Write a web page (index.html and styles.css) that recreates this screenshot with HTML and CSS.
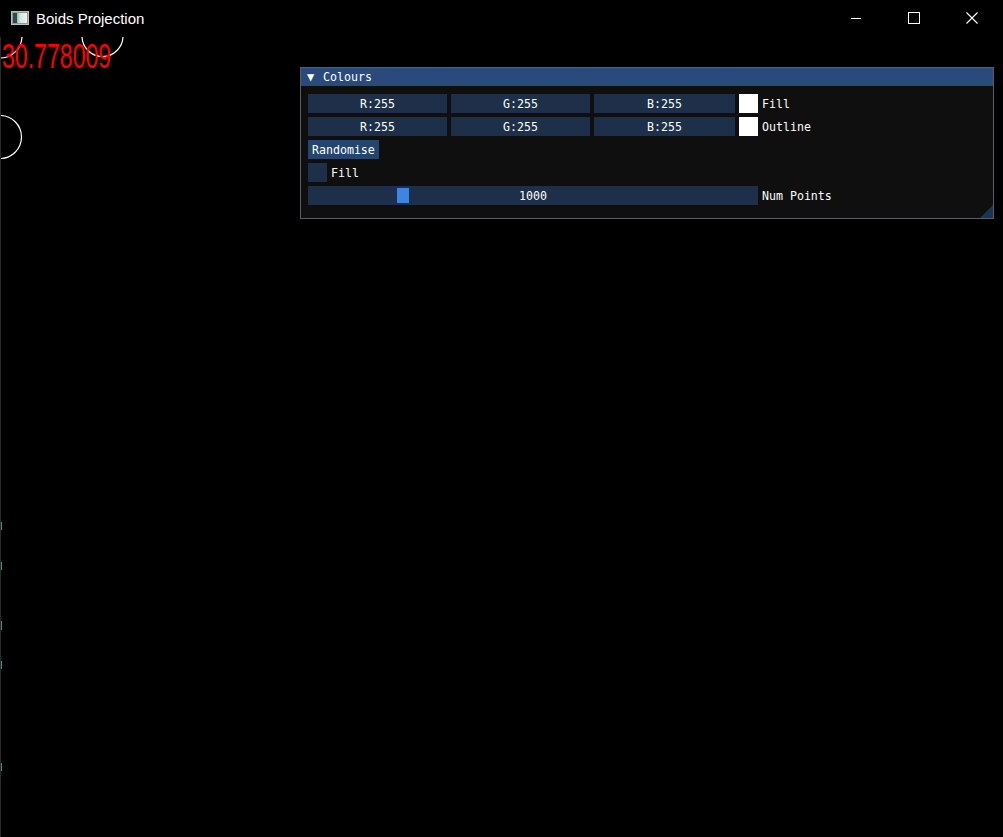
FILE: index.html
```html
<!DOCTYPE html>
<html>
<head>
<meta charset="utf-8">
<link rel="stylesheet" href="styles.css">
</head>
<body>
<div class="app">
  <header class="titlebar">
    <div class="app-title">
      <svg class="app-icon" width="18" height="14" viewBox="0 0 18 14">
        <defs>
          <linearGradient id="g" x1="0" x2="1" y1="0" y2="0">
            <stop offset="0" stop-color="#3d7f74"/>
            <stop offset="0.5" stop-color="#cfe6e0"/>
            <stop offset="1" stop-color="#eef4f3"/>
          </linearGradient>
        </defs>
        <rect x="0.5" y="0.5" width="17" height="13" fill="#8a9896" stroke="#b9c2c1"/>
        <rect x="2" y="2" width="14" height="10" fill="url(#g)"/>
        <rect x="2" y="2" width="4" height="10" fill="#2e4b49"/>
      </svg>
      <span class="app-name">Boids Projection</span>
    </div>
    <div class="win-controls">
      <div class="win-btn"><svg width="12" height="12" viewBox="0 0 12 12"><line x1="1" y1="6.5" x2="11" y2="6.5" stroke="#fff" stroke-width="1"/></svg></div>
      <div class="win-btn"><svg width="12" height="12" viewBox="0 0 12 12"><rect x="0.5" y="0.5" width="11" height="11" fill="none" stroke="#fff" stroke-width="1"/></svg></div>
      <div class="win-btn"><svg width="12" height="12" viewBox="0 0 12 12"><path d="M0.5 0.5 L11.5 11.5 M11.5 0.5 L0.5 11.5" stroke="#fff" stroke-width="1.1"/></svg></div>
    </div>
  </header>

  <main class="canvas">
    <svg class="scene" width="1003" height="800" viewBox="0 0 1003 800">
      <circle cx="0" cy="-1" r="22" fill="none" stroke="#fff" stroke-width="1.2"/>
      <circle cx="102.5" cy="-1" r="20.5" fill="none" stroke="#fff" stroke-width="1.2"/>
      <circle cx="0" cy="100" r="21.5" fill="none" stroke="#fff" stroke-width="1.2"/>
      <g stroke="#4f8a8a" stroke-width="2">
        <line x1="1" y1="485" x2="1" y2="493"/>
        <line x1="1" y1="525" x2="1" y2="533"/>
        <line x1="1" y1="584" x2="1" y2="593"/>
        <line x1="1" y1="624" x2="1" y2="632"/>
        <line x1="1" y1="726" x2="1" y2="734"/>
      </g>
    </svg>

    <div class="fps">30.778009</div>

    <section class="panel">
      <div class="panel-title"><span class="tri">▼</span><span>Colours</span></div>
      <div class="panel-body">
        <div class="row">
          <div class="frame w139">R:255</div>
          <div class="frame w139">G:255</div>
          <div class="frame w141">B:255</div>
          <div class="swatch"></div>
          <span class="label">Fill</span>
        </div>
        <div class="row">
          <div class="frame w139">R:255</div>
          <div class="frame w139">G:255</div>
          <div class="frame w141">B:255</div>
          <div class="swatch"></div>
          <span class="label">Outline</span>
        </div>
        <div class="row">
          <div class="button">Randomise</div>
        </div>
        <div class="row">
          <div class="checkbox"></div>
          <span class="label">Fill</span>
        </div>
        <div class="row">
          <div class="slider">
            <div class="grab"></div>
            <span class="slider-val">1000</span>
          </div>
          <span class="label">Num Points</span>
        </div>
      </div>
      <div class="grip"></div>
    </section>
  </main>
</div>
</body>
</html>
```
FILE: styles.css
```css
* { box-sizing: border-box; }
html, body {
  margin: 0;
  padding: 0;
  background: #000;
  width: 1003px;
  height: 837px;
  overflow: hidden;
}
.app {
  display: flex;
  flex-direction: column;
  height: 837px;
}
.titlebar {
  height: 37px;
  display: flex;
  justify-content: space-between;
  align-items: flex-start;
  background: #000;
  color: #fff;
}
.app-title {
  display: flex;
  align-items: center;
  height: 36px;
  padding-left: 11px;
  gap: 7px;
}
.app-icon { display: block; margin-top: -1px; }
.app-name {
  font-family: "Liberation Sans", Arial, sans-serif;
  font-size: 15px;
  color: #fff;
}
.win-controls {
  display: flex;
  margin-right: 2px;
}
.win-btn {
  width: 58px;
  height: 35px;
  display: flex;
  align-items: center;
  justify-content: center;
}
.canvas {
  position: relative;
  flex: 1;
  overflow: hidden;
  border-left: 1px solid #2a2a2a;
}
.scene {
  position: absolute;
  left: -1px;
  top: 0;
}
.fps {
  position: absolute;
  left: 1px;
  top: 0px;
  font-family: "Liberation Sans", Arial, sans-serif;
  font-size: 35px;
  line-height: 38px;
  color: #f00;
  transform: scaleX(0.66);
  transform-origin: left top;
  white-space: nowrap;
}
.panel {
  position: absolute;
  left: 299px;
  top: 30px;
  width: 694px;
  background: #0f0f0f;
  border: 1px solid #5c5c66;
  font-family: "DejaVu Sans Mono", "Liberation Mono", monospace;
  font-size: 11.6px;
  color: #fff;
}
.panel-title {
  height: 18px;
  background: #294a7a;
  display: flex;
  align-items: center;
  padding-left: 6px;
  gap: 6px;
  line-height: 20px;
}
.tri { font-size: 12px; width: 10px; }
.panel-body {
  padding: 8px 8px 13px 7px;
  display: flex;
  flex-direction: column;
  gap: 4px;
}
.row {
  display: flex;
  align-items: center;
  gap: 4px;
  height: 19px;
}
.frame {
  height: 19px;
  background: #1d2f49;
  text-align: center;
  line-height: 21px;
}
.w139 { width: 139px; }
.w141 { width: 141px; }
.swatch {
  width: 19px;
  height: 19px;
  background: #fff;
}
.label {
  height: 19px;
  line-height: 21px;
  white-space: nowrap;
}
.button {
  width: 71px;
  height: 19px;
  background: #24456d;
  padding-left: 4px;
  line-height: 21px;
}
.checkbox {
  width: 19px;
  height: 19px;
  background: #1d2f49;
}
.slider {
  position: relative;
  width: 450px;
  height: 19px;
  background: #1d2f49;
  display: flex;
  justify-content: center;
  align-items: flex-start;
}
.grab {
  position: absolute;
  left: 89px;
  top: 2px;
  width: 12px;
  height: 15px;
  background: #3d85e0;
}
.slider-val {
  position: relative;
  line-height: 21px;
}
.grip {
  position: absolute;
  right: 0;
  bottom: 0;
  width: 13px;
  height: 13px;
  background: #1b3454;
  clip-path: polygon(100% 0, 100% 100%, 0 100%);
}
```
